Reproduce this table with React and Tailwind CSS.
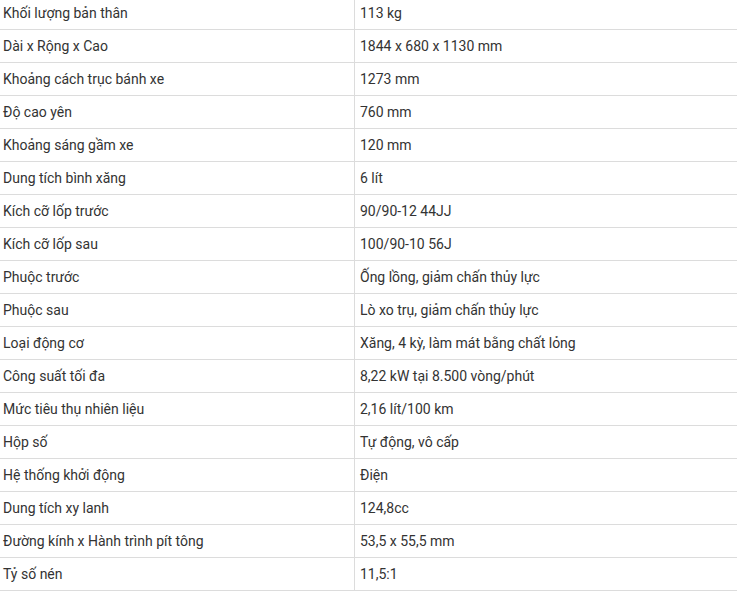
import React from 'react'

const specs = [
  ['Khối lượng bản thân', '113 kg'],
  ['Dài x Rộng x Cao', '1844 x 680 x 1130 mm'],
  ['Khoảng cách trục bánh xe', '1273 mm'],
  ['Độ cao yên', '760 mm'],
  ['Khoảng sáng gầm xe', '120 mm'],
  ['Dung tích bình xăng', '6 lít'],
  ['Kích cỡ lốp trước', '90/90-12 44JJ'],
  ['Kích cỡ lốp sau', '100/90-10 56J'],
  ['Phuộc trước', 'Ống lồng, giảm chấn thủy lực'],
  ['Phuộc sau', 'Lò xo trụ, giảm chấn thủy lực'],
  ['Loại động cơ', 'Xăng, 4 kỳ, làm mát bằng chất lỏng'],
  ['Công suất tối đa', '8,22 kW tại 8.500 vòng/phút'],
  ['Mức tiêu thụ nhiên liệu', '2,16 lít/100 km'],
  ['Hộp số', 'Tự động, vô cấp'],
  ['Hệ thống khởi động', 'Điện'],
  ['Dung tích xy lanh', '124,8cc'],
  ['Đường kính x Hành trình pít tông', '53,5 x 55,5 mm'],
  ['Tỷ số nén', '11,5:1'],
]

const App = () => {
  return (
    <div className="w-[737px] h-[593px] overflow-hidden bg-white">
      {/* spec table, top edge cropped */}
      <div className="-mt-[3px] flex flex-col text-[14px] text-[#333] font-['Roboto',sans-serif]">
        {specs.map(([label, value], i) => (
          <div key={i} className="flex h-[33px] border-b border-[#dcdcdc]">
            <div className="w-[355px] shrink-0 border-r border-[#dcdcdc] pl-[3px] flex items-center">
              {label}
            </div>
            <div className="flex-1 pl-[5px] flex items-center">{value}</div>
          </div>
        ))}
      </div>
    </div>
  )
}

export default App
